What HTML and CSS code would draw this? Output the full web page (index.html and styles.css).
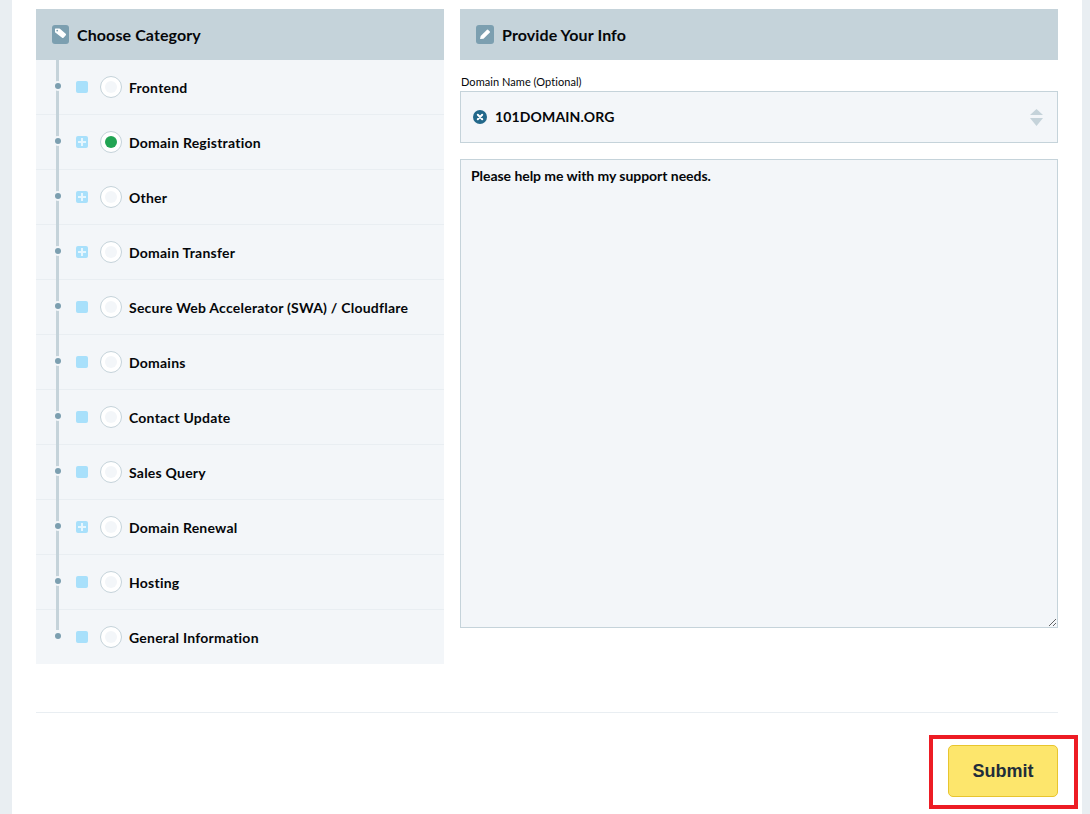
FILE: index.html
```html
<!DOCTYPE html>
<html lang="en">
<head>
<meta charset="utf-8">
<title>Support</title>
<link rel="stylesheet" href="styles.css">
</head>
<body>
<main class="panel">
  <div class="columns">
    <section class="col-left">
      <h2 class="head">
        <span class="head-icon icon-tag"><svg viewBox="0 0 17 19" width="17" height="19"><path d="M3.500 3.500h3.700a1 1 0 0 1 .7.3l5.800 5a1 1 0 0 1 .1 1.400l-2.300 2.500a1 1 0 0 1-1.400.1L3.300 7.600a1 1 0 0 1-.3-.7V4a.5.5 0 0 1 .5-.5z" fill="#fff"/><circle cx="5.200" cy="5.600" r=".9" fill="#7c9fb0"/></svg></span>
        Choose Category
      </h2>
      <ul class="tree">
        <li class="row"><span class="dot"></span><span class="sq"></span><span class="radio"></span><span class="name">Frontend</span></li>
        <li class="row"><span class="dot"></span><span class="sq plus"></span><span class="radio on"></span><span class="name">Domain Registration</span></li>
        <li class="row"><span class="dot"></span><span class="sq plus"></span><span class="radio"></span><span class="name">Other</span></li>
        <li class="row"><span class="dot"></span><span class="sq plus"></span><span class="radio"></span><span class="name">Domain Transfer</span></li>
        <li class="row"><span class="dot"></span><span class="sq"></span><span class="radio"></span><span class="name">Secure Web Accelerator (SWA) / Cloudflare</span></li>
        <li class="row"><span class="dot"></span><span class="sq"></span><span class="radio"></span><span class="name">Domains</span></li>
        <li class="row"><span class="dot"></span><span class="sq"></span><span class="radio"></span><span class="name">Contact Update</span></li>
        <li class="row"><span class="dot"></span><span class="sq"></span><span class="radio"></span><span class="name">Sales Query</span></li>
        <li class="row"><span class="dot"></span><span class="sq plus"></span><span class="radio"></span><span class="name">Domain Renewal</span></li>
        <li class="row"><span class="dot"></span><span class="sq"></span><span class="radio"></span><span class="name">Hosting</span></li>
        <li class="row"><span class="dot"></span><span class="sq"></span><span class="radio"></span><span class="name">General Information</span></li>
      </ul>
    </section>
    <section class="col-right">
      <h2 class="head">
        <span class="head-icon"><svg viewBox="0 0 18 19" width="18" height="19"><path d="M4 14l.7-3 6.300-6.300a.8.8 0 0 1 1.100 0l1.700 1.700a.8.8 0 0 1 0 1.100L7.500 13.800z" fill="#fff"/></svg></span>
        Provide Your Info
      </h2>
      <label class="field-label">Domain Name (Optional)</label>
      <div class="select">
        <svg class="clear" viewBox="0 0 14 14" width="14" height="14"><circle cx="7" cy="7" r="7" fill="#22688a"/><path d="M4.800 4.800l4.400 4.400M9.200 4.800L4.800 9.200" stroke="#fff" stroke-width="2" stroke-linecap="round"/></svg>
        <span class="select-value">101DOMAIN.ORG</span>
        <svg class="arrows" viewBox="0 0 13 17" width="13" height="17"><path d="M6.500 0L13 6H0z" fill="#c5d3da"/><path d="M6.500 17L0 9h13z" fill="#c5d3da"/></svg>
      </div>
      <textarea class="message">Please help me with my support needs.</textarea>
    </section>
  </div>
  <div class="foot">
    <button class="submit" type="button">Submit</button>
    <span class="callout"></span>
  </div>
</main>
</body>
</html>
```
FILE: styles.css
```css
* { box-sizing: border-box; }
html, body { margin: 0; height: 814px; overflow: hidden; }
body {
  background: #e9eef2;
  font-family: Lato, "Liberation Sans", sans-serif;
  color: #05070a;
  padding: 0 8px 0 12px;
}
.panel {
  background: #fff;
  height: 814px;
  padding: 9px 24px 0 24px;
}
.columns { display: flex; gap: 16px; align-items: flex-start; height: 655px; }
.col-left { width: 408px; }
.col-right { width: 598px; }
.head {
  display: flex;
  align-items: center;
  gap: 8px;
  height: 51px;
  margin: 0;
  padding-left: 16px;
  background: #c5d3da;
  font-size: 16px;
  font-weight: 700;
  letter-spacing: 0.1px;
}
.head-icon {
  width: 18px;
  height: 19px;
  border-radius: 3px;
  background: #7c9fb0;
  display: flex;
  align-items: center;
  justify-content: center;
}
.icon-tag { width: 17px; }
.tree {
  position: relative;
  list-style: none;
  margin: 0;
  padding: 0;
  background: #f3f6f9;
}
.tree::before {
  content: "";
  position: absolute;
  left: 20px;
  top: 0;
  bottom: 34px;
  width: 3px;
  background: #c5d3da;
}
.row {
  display: flex;
  align-items: center;
  height: 55px;
  padding-left: 19px;
  border-bottom: 1px solid #e9eef2;
}
.row:last-child { height: 54px; border-bottom: 0; }
.dot {
  position: relative;
  width: 6px;
  height: 6px;
  margin-top: -3px;
  margin-right: 15px;
  border-radius: 50%;
  background: #7c9fb0;
  box-shadow: 0 0 0 2px #f3f6f9;
}
.sq {
  position: relative;
  width: 12px;
  height: 12px;
  margin-top: -1px;
  margin-right: 12px;
  border-radius: 2px;
  background: #a8e0fb;
}
.plus::before, .plus::after {
  content: "";
  position: absolute;
  background: #e6f6fe;
}
.plus::before { left: 2px; right: 2px; top: 5px; height: 2px; }
.plus::after { top: 2px; bottom: 2px; left: 5px; width: 2px; }
.radio {
  width: 22px;
  height: 22px;
  margin-top: -1px;
  margin-right: 7px;
  border-radius: 50%;
  background: #fff;
  border: 1px solid #c5d3da;
  display: flex;
  align-items: center;
  justify-content: center;
}
.radio::after {
  content: "";
  width: 12px;
  height: 12px;
  border-radius: 50%;
  background: #f3f6f9;
}
.radio.on::after { background: #21a453; }
.name { font-size: 14px; font-weight: 700; letter-spacing: 0.23px; }
.field-label {
  display: block;
  margin-top: 15px;
  height: 16px;
  padding-left: 1px;
  font-size: 11px;
  line-height: 14px;
  letter-spacing: 0.05px;
}
.select {
  display: flex;
  align-items: center;
  height: 52px;
  padding: 0 14px 0 12px;
  background: #f3f6f9;
  border: 1px solid #c5d3da;
}
.clear { margin-right: 8px; }
.select-value {
  flex: 1;
  margin-top: -2px;
  font-size: 14px;
  font-weight: 700;
  letter-spacing: 0.15px;
}
.arrows { display: block; }
.message {
  display: block;
  width: 598px;
  height: 469px;
  margin-top: 16px;
  padding: 7px 10px;
  background: #f3f6f9;
  border: 1px solid #c5d3da;
  border-radius: 0;
  outline: 0;
  font-family: Lato, "Liberation Sans", sans-serif;
  font-size: 14px;
  font-weight: 700;
  line-height: 18px;
  letter-spacing: -0.05px;
  color: #05070a;
}
.foot {
  position: relative;
  display: flex;
  justify-content: flex-end;
  margin-top: 48px;
  padding-top: 32px;
  border-top: 1px solid #e9eef2;
}
.submit {
  width: 110px;
  height: 52px;
  background: #fde66c;
  border: 1px solid #e8c52e;
  border-radius: 5px;
  font-family: "Liberation Sans", Arial, sans-serif;
  font-size: 18px;
  font-weight: 700;
  color: #1f2d3a;
}
.callout {
  position: absolute;
  right: -20px;
  top: 22px;
  width: 149px;
  height: 74px;
  border: 4px solid #ed1c24;
}
```
